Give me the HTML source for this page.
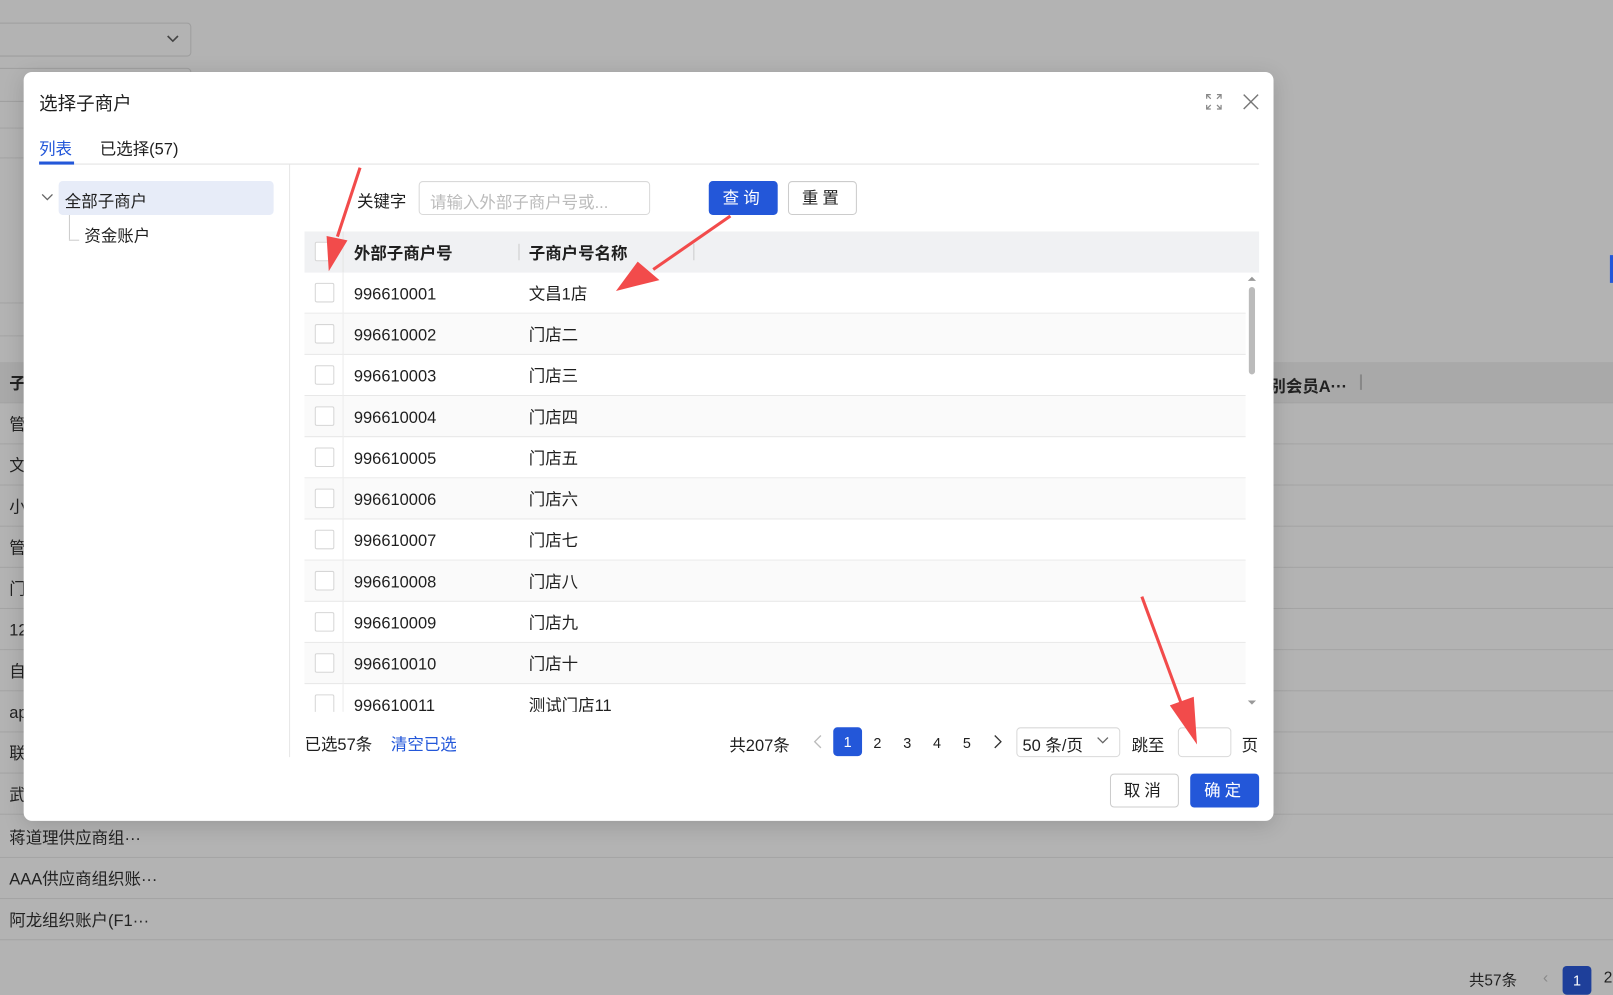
<!DOCTYPE html>
<html><head><meta charset="utf-8"><style>
*{box-sizing:border-box;margin:0;padding:0}
html,body{width:1613px;height:981px;overflow:hidden;background:#b3b3b3}
body{font-family:"Liberation Sans","Noto Sans CJK SC",sans-serif;color:#1f1f1f}
#w{position:absolute;left:0;top:0;width:1568px;height:954px;transform:scale(1.0287);transform-origin:0 0}
.a{position:absolute}
.bgrow{position:absolute;left:0;width:1568px;height:40px;border-bottom:1px solid #a4a4a4;font-size:16px;line-height:44px;padding-left:9px;color:#222}
.modal{position:absolute;left:23px;top:70px;width:1215px;height:728px;background:#fff;border-radius:8px;box-shadow:0 4px 20px rgba(0,0,0,.15)}
.t{position:absolute;white-space:nowrap}
.row{position:absolute;left:296px;width:915px;height:40px;border-bottom:1px solid #e8e8e8;font-size:16px;line-height:44px}
.row.alt{background:#fafafa}
.cb{position:absolute;left:10px;top:10px;width:19px;height:19px;border:1px solid #d6d6d6;border-radius:2px;background:#fff}
.vl{position:absolute;left:37px;top:0;width:1px;height:40px;background:#ececec}
.c1{position:absolute;left:48px}.c2{position:absolute;left:218px}
.btn{position:absolute;height:33px;border-radius:4px;font-size:16px;text-align:center;line-height:31px;letter-spacing:4px}
.pg{position:absolute;top:712px;font-size:14px;line-height:20px}
</style></head><body><div id="w">
<div class="a" style="left:-5px;top:22px;width:191px;height:33px;border:1px solid #9e9e9e;border-radius:4px"></div>
<svg class="a" style="left:161px;top:32px" width="14" height="12"><path d="M2 3l5 5 5-5" fill="none" stroke="#444" stroke-width="1.6"/></svg>
<div class="a" style="left:-5px;top:66px;width:191px;height:33px;border:1px solid #9e9e9e;border-radius:4px"></div>
<div class="a" style="left:0;top:124px;width:23px;height:1px;background:#a4a4a4"></div>
<div class="a" style="left:0;top:153px;width:23px;height:1px;background:#a4a4a4"></div>
<div class="a" style="left:0;top:294px;width:23px;height:1px;background:#a4a4a4"></div>
<div class="a" style="left:0;top:326px;width:23px;height:1px;background:#a4a4a4"></div>
<div class="bgrow" style="top:352px;background:#a9a9a9;font-weight:bold">子</div>
<div class="bgrow" style="top:392px">管</div>
<div class="bgrow" style="top:432px">文</div>
<div class="bgrow" style="top:472px">小</div>
<div class="bgrow" style="top:512px">管</div>
<div class="bgrow" style="top:552px">门</div>
<div class="bgrow" style="top:592px">12</div>
<div class="bgrow" style="top:632px">自</div>
<div class="bgrow" style="top:672px">ap</div>
<div class="bgrow" style="top:712px">联</div>
<div class="bgrow" style="top:752px">武</div>
<div class="bgrow" style="top:794px">蒋道理供应商组···</div>
<div class="bgrow" style="top:834px">AAA供应商组织账···</div>
<div class="bgrow" style="top:874px">阿龙组织账户(F1···</div>
<div class="t" style="left:1234px;top:362px;font-size:16px;font-weight:bold;color:#222">别会员A···</div>
<div class="a" style="left:1322px;top:364px;width:2px;height:15px;background:#888"></div>
<div class="a" style="left:1565px;top:248px;width:3px;height:27px;background:#2357d9"></div>
<div class="t" style="left:1428px;top:942px;font-size:15px;color:#222">共57条</div>
<div class="t" style="left:1500px;top:942px;font-size:15px;color:#888">‹</div>
<div class="a" style="left:1519px;top:939px;width:28px;height:28px;border-radius:4px;background:#1e3f9a;color:#fff;font-size:14px;text-align:center;line-height:28px">1</div>
<div class="t" style="left:1559px;top:942px;font-size:15px">2</div>

<div class="modal">
<div class="t" style="left:15px;top:17px;font-size:18px">选择子商户</div>
<svg class="a" style="left:1149px;top:21px" width="16" height="16" fill="none" stroke="#888" stroke-width="1.2"><path d="M1 5V1h4M1 1l4 4M11 1h4v4M15 1l-4 4M1 11v4h4M1 15l4-4M15 11v4h-4M15 15l-4-4"/></svg>
<svg class="a" style="left:1185px;top:21px" width="16" height="16" fill="none" stroke="#777" stroke-width="1.4"><path d="M1 1l14 14M15 1L1 15"/></svg>
<div class="t" style="left:15px;top:61px;font-size:16px;color:#2357d9">列表</div>
<div class="t" style="left:74px;top:61px;font-size:16px">已选择(57)</div>
<div class="a" style="left:15px;top:89px;width:1186px;height:1px;background:#e2e2e2"></div>
<div class="a" style="left:15px;top:87px;width:34px;height:3px;background:#2357d9"></div>
<div class="a" style="left:258px;top:90px;width:1px;height:576px;background:#e6e6e6"></div>
<div class="a" style="left:34px;top:106px;width:209px;height:33px;background:#e7ecf8;border-radius:4px"></div>
<svg class="a" style="left:17px;top:117px" width="13" height="10"><path d="M1 2l5 5 5-5" fill="none" stroke="#666" stroke-width="1.3"/></svg>
<div class="t" style="left:40px;top:112px;font-size:16px">全部子商户</div>
<div class="a" style="left:44px;top:139px;width:1px;height:24px;background:#ccc"></div>
<div class="a" style="left:44px;top:163px;width:10px;height:1px;background:#ccc"></div>
<div class="t" style="left:59px;top:146px;font-size:16px">资金账户</div>
</div>

<div class="t" style="left:347px;top:182px;font-size:16px">关键字</div>
<div class="a" style="left:407px;top:176px;width:225px;height:33px;border:1px solid #d9d9d9;border-radius:4px;background:#fff"></div>
<div class="t" style="left:418px;top:183px;font-size:16px;color:#bbb">请输入外部子商户号或...</div>
<div class="btn" style="left:689px;top:176px;width:67px;background:#2357d9;color:#fff;line-height:35px">查询</div>
<div class="btn" style="left:766px;top:176px;width:67px;border:1px solid #ccc;background:#fff;line-height:33px">重置</div>

<div class="a" style="left:296px;top:225px;width:928px;height:40px;background:#f0f1f3"></div>
<div class="cb" style="left:306px;top:235px"></div>
<div class="a" style="left:333px;top:225px;width:1px;height:40px;background:#e4e4e4"></div>
<div class="t" style="left:344px;top:233px;font-size:16px;font-weight:bold">外部子商户号</div>
<div class="a" style="left:504px;top:237px;width:1px;height:16px;background:#ccc"></div>
<div class="t" style="left:514px;top:233px;font-size:16px;font-weight:bold">子商户号名称</div>
<div class="a" style="left:674px;top:237px;width:1px;height:16px;background:#ccc"></div>

<div class="a" style="left:296px;top:265px;width:915px;height:427px;overflow:hidden">
<div class="row" style="left:0;top:0"><div class="cb"></div><div class="vl"></div><span class="c1">996610001</span><span class="c2">文昌1店</span></div>
<div class="row alt" style="left:0;top:40px"><div class="cb"></div><div class="vl"></div><span class="c1">996610002</span><span class="c2">门店二</span></div>
<div class="row" style="left:0;top:80px"><div class="cb"></div><div class="vl"></div><span class="c1">996610003</span><span class="c2">门店三</span></div>
<div class="row alt" style="left:0;top:120px"><div class="cb"></div><div class="vl"></div><span class="c1">996610004</span><span class="c2">门店四</span></div>
<div class="row" style="left:0;top:160px"><div class="cb"></div><div class="vl"></div><span class="c1">996610005</span><span class="c2">门店五</span></div>
<div class="row alt" style="left:0;top:200px"><div class="cb"></div><div class="vl"></div><span class="c1">996610006</span><span class="c2">门店六</span></div>
<div class="row" style="left:0;top:240px"><div class="cb"></div><div class="vl"></div><span class="c1">996610007</span><span class="c2">门店七</span></div>
<div class="row alt" style="left:0;top:280px"><div class="cb"></div><div class="vl"></div><span class="c1">996610008</span><span class="c2">门店八</span></div>
<div class="row" style="left:0;top:320px"><div class="cb"></div><div class="vl"></div><span class="c1">996610009</span><span class="c2">门店九</span></div>
<div class="row alt" style="left:0;top:360px"><div class="cb"></div><div class="vl"></div><span class="c1">996610010</span><span class="c2">门店十</span></div>
<div class="row" style="left:0;top:400px"><div class="cb"></div><div class="vl"></div><span class="c1">996610011</span><span class="c2">测试门店11</span></div>
</div>
<svg class="a" style="left:1212px;top:268px" width="10" height="6"><path d="M1 5l4-4 4 4z" fill="#999"/></svg>
<div class="a" style="left:1214px;top:279px;width:6px;height:85px;background:#bbb;border-radius:3px"></div>
<svg class="a" style="left:1212px;top:680px" width="10" height="6"><path d="M1 1l4 4 4-4z" fill="#999"/></svg>

<div class="t" style="left:296px;top:710px;font-size:16px">已选57条</div>
<div class="t" style="left:380px;top:710px;font-size:16px;color:#2357d9">清空已选</div>
<div class="t" style="left:709px;top:711px;font-size:16px">共207条</div>
<svg class="a" style="left:790px;top:714px" width="10" height="14"><path d="M8 1L2 7l6 6" fill="none" stroke="#bbb" stroke-width="1.3"/></svg>
<div class="a" style="left:810px;top:707px;width:28px;height:28px;border-radius:4px;background:#2357d9;color:#fff;font-size:14px;text-align:center;line-height:28px">1</div>
<div class="pg" style="left:849px">2</div><div class="pg" style="left:878px">3</div><div class="pg" style="left:907px">4</div><div class="pg" style="left:936px">5</div>
<svg class="a" style="left:965px;top:714px" width="10" height="14"><path d="M2 1l6 6-6 6" fill="none" stroke="#333" stroke-width="1.3"/></svg>
<div class="a" style="left:988px;top:707px;width:101px;height:29px;border:1px solid #d9d9d9;border-radius:4px"></div>
<div class="t" style="left:994px;top:711px;font-size:16px">50 条/页</div>
<svg class="a" style="left:1066px;top:716px" width="12" height="9"><path d="M1 1l5 5 5-5" fill="none" stroke="#666" stroke-width="1.3"/></svg>
<div class="t" style="left:1100px;top:711px;font-size:16px">跳至</div>
<div class="a" style="left:1145px;top:707px;width:52px;height:29px;border:1px solid #d9d9d9;border-radius:4px"></div>
<div class="t" style="left:1207px;top:711px;font-size:16px">页</div>
<div class="btn" style="left:1079px;top:752px;width:67px;border:1px solid #ccc;background:#fff;line-height:33px">取消</div>
<div class="btn" style="left:1157px;top:752px;width:67px;background:#2357d9;color:#fff;line-height:35px">确定</div>

<svg class="a" style="left:0;top:0" width="1568" height="954">
<g stroke="#f24b4b" stroke-width="3" fill="#f24b4b">
<line x1="350" y1="163" x2="328" y2="230"/><path d="M318 230L320 262L337 234Z" stroke-width="1"/>
<line x1="710" y1="210" x2="635" y2="262"/><path d="M620 255L600 282L640 272Z" stroke-width="1"/>
<line x1="1110" y1="580" x2="1148" y2="683"/><path d="M1138 686L1163 722L1160 678Z" stroke-width="1"/>
</g></svg>
</div></body></html>
